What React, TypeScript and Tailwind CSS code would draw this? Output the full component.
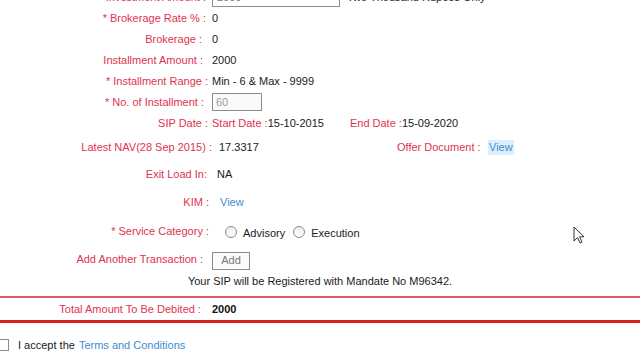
import React from "react";

const font = { fontFamily: '"Liberation Sans", Arial, sans-serif' };

interface RowProps {
  label: string;
  h: string;
  lpr?: string;
  children?: React.ReactNode;
}

function Row({ label, h, lpr = "pr-0", children }: RowProps) {
  return (
    <div className={`grid grid-cols-[208px_1fr] gap-x-1 items-center ${h}`}>
      <div className={`text-right text-[#e0334d] whitespace-nowrap ${lpr}`}>{label}</div>
      <div className="flex items-center whitespace-nowrap text-[#1a1a1a]">{children}</div>
    </div>
  );
}

function Radio({ label }: { label: string }) {
  return (
    <label className="flex items-center">
      <span className="w-3 h-3 rounded-full border border-[#8a8a8a] bg-gradient-to-b from-[#eeeeee] to-white" />
      <span className="ml-[6px] mt-[3px] text-[#1a1a1a]">{label}</span>
    </label>
  );
}

export default function App() {
  return (
    <div className="relative w-[640px] h-[360px] overflow-hidden bg-white text-[11px] leading-none" style={font}>
      <div className="-mt-[13px]">
        <Row label="Investment Amount :" h="h-[21px]" lpr="pr-[2px]">
          <div className="w-[128px] h-[18px] border border-[#8c8c8c] px-1 flex items-center text-[#777]">2000</div>
          <span className="ml-[7px]">Two Thousand Rupees Only</span>
        </Row>
        <Row label="* Brokerage Rate % :" h="h-[21px]" lpr="pr-[2px]">0</Row>
        <Row label="Brokerage :" h="h-[21px]" lpr="pr-[6px]">0</Row>
        <Row label="Installment Amount :" h="h-[21px]" lpr="pr-[5px]">2000</Row>
        <Row label="* Installment Range :" h="h-[21px]">Min - 6 &amp; Max - 9999</Row>
        <Row label="* No. of Installment :" h="h-[20px]" lpr="pr-[4px]">
          <div className="w-[50px] h-[18px] border border-[#8c8c8c] bg-[#fafafa] px-[3px] flex items-center text-[#9a9a9a]">60</div>
        </Row>
        <Row label="SIP Date :" h="h-[23px]">
          <span className="text-[#e0334d]">Start Date :</span>
          <span>15-10-2015</span>
          <span className="ml-[26px] text-[#e0334d]">End Date :</span>
          <span>15-09-2020</span>
        </Row>

        <div className="grid grid-cols-[212px_185px_82px_1fr] items-center h-[25px] whitespace-nowrap">
          <div className="text-right text-[#e0334d]">Latest NAV(28 Sep 2015) :</div>
          <div className="pl-[7px] text-[#1a1a1a]">17.3317</div>
          <div className="text-right text-[#e0334d]">Offer Document :</div>
          <div className="pl-[9px] flex">
            <span className="bg-[#dceefb] text-[#3d8ecf] px-[1px] py-[2px]">View</span>
          </div>
        </div>

        <div className="flex items-center h-[29px] whitespace-nowrap">
          <div className="w-[207px] text-right text-[#e0334d]">Exit Load In:</div>
          <div className="pl-[10px] text-[#1a1a1a]">NA</div>
        </div>

        <div className="flex items-center h-[27px] whitespace-nowrap">
          <div className="w-[209px] text-right text-[#e0334d]">KIM :</div>
          <div className="pl-[11px] text-[#3d8ecf]">View</div>
        </div>

        <div className="flex items-center h-[31px] whitespace-nowrap">
          <div className="w-[209px] text-right text-[#e0334d]">* Service Category :</div>
          <div className="pl-[16px] flex items-center gap-2">
            <Radio label="Advisory" />
            <Radio label="Execution" />
          </div>
        </div>

        <Row label="Add Another Transaction :" h="h-[25px]" lpr="pr-[5px]">
          <button className="w-[38px] h-[18px] mt-[2px] border border-[#8c8c8c] bg-[#fbfbfb] text-[#777] text-[11px] flex items-center justify-center">
            Add
          </button>
        </Row>

        <div className="h-[19px] flex items-center justify-center text-[#1a1a1a]">
          Your SIP will be Registered with Mandate No M96342.
        </div>

        <div className="mt-[5px] border-t-2 border-b-[3px] border-t-[#e25a5a] border-b-[#d8221f]">
          <div className="grid grid-cols-[208px_1fr] gap-x-1 items-center h-[22px]">
            <div className="text-right text-[#e0334d] pr-[7px]">Total Amount To Be Debited :</div>
            <div className="font-bold text-[#111]">2000</div>
          </div>
        </div>

        <div className="mt-[15px] h-[14px] flex items-center">
          <span className="w-[12px] h-[12px] -ml-[3px] border border-[#8c8c8c] bg-white" />
          <span className="ml-[9px] text-[#1a1a1a]">I accept the</span>
          <span className="ml-[4px] text-[#3d8ecf]">Terms and Conditions</span>
        </div>
      </div>

      <svg className="absolute left-[573px] top-[226px]" width="12" height="18" viewBox="0 0 12 18">
        <path d="M1 1 L1 15 L4.5 11.6 L7 17 L9 16 L6.6 10.8 L11 10.8 Z" fill="white" stroke="#333" strokeWidth="1" strokeLinejoin="round" />
      </svg>
    </div>
  );
}
